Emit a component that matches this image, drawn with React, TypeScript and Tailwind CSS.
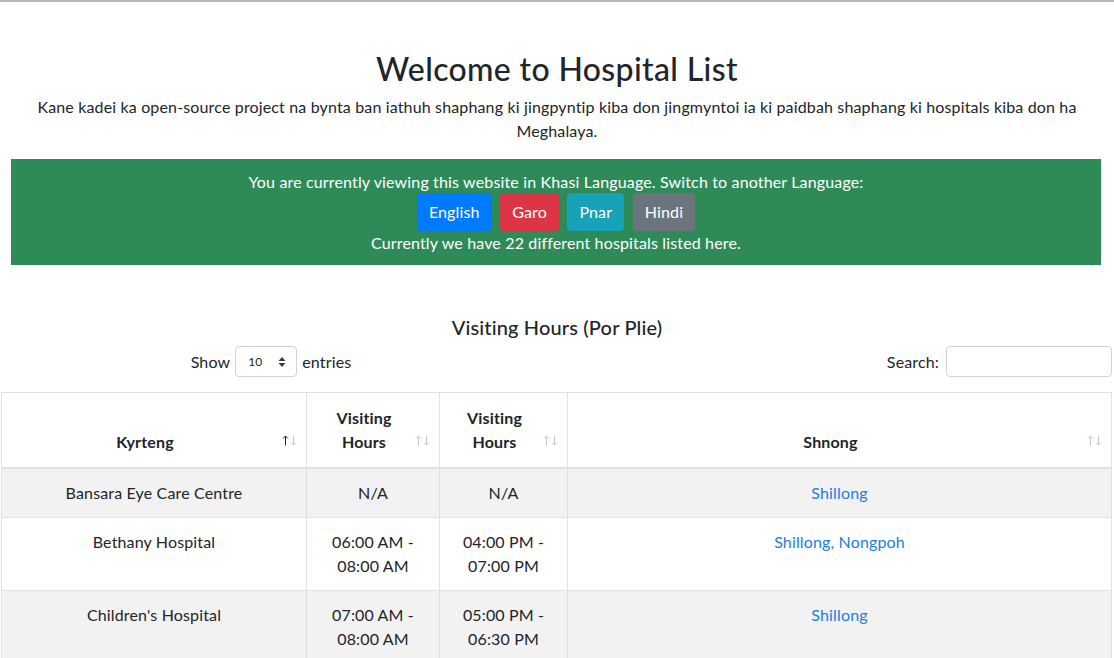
import React from "react";

const font = { fontFamily: "Lato, 'Liberation Sans', sans-serif" };

function Arrow({ up, color }: { up?: boolean; color: string }) {
  return (
    <svg width="7" height="11" viewBox="0 0 7 11" className={up ? "" : "rotate-180"}>
      <path d="M3.5 1 V10.5 M1 3.5 L3.5 1 L6 3.5" fill="none" stroke={color} strokeWidth="1" />
    </svg>
  );
}

function SortIcons({ active }: { active?: boolean }) {
  return (
    <span className="absolute right-[9px] bottom-[21px] flex gap-[1px]">
      <Arrow up color={active ? "#212529" : "#c4c6c8"} />
      <Arrow color="#c4c6c8" />
    </span>
  );
}

const rows = [
  { name: "Bansara Eye Care Centre", a: ["N/A"], b: ["N/A"], place: "Shillong" },
  { name: "Bethany Hospital", a: ["06:00 AM -", "08:00 AM"], b: ["04:00 PM -", "07:00 PM"], place: "Shillong, Nongpoh" },
  { name: "Children's Hospital", a: ["07:00 AM -", "08:00 AM"], b: ["05:00 PM -", "06:30 PM"], place: "Shillong" },
];

export default function App() {
  return (
    <div className="min-h-[658px] bg-white text-[#212529] text-[16px] leading-[24px] tracking-[0.15px]" style={font}>
      <div className="h-[2px] bg-[#b9b9b9]" />
      <div className="pt-[48px] text-center">
        <h2 className="text-[32px] leading-[38px] font-medium tracking-[0.35px]">Welcome to Hospital List</h2>
        <p className="mt-[7px] px-[30px]">
          Kane kadei ka open-source project na bynta ban iathuh shaphang ki jingpyntip kiba don jingmyntoi ia ki paidbah shaphang ki hospitals kiba don ha Meghalaya.
        </p>
      </div>
      <div className="mx-[11px] mt-[16px] w-[1090px] bg-[#2e8b57] pt-[11px] pb-[10px] text-center text-white">
        <div>You are currently viewing this website in Khasi Language. Switch to another Language:</div>
        <div className="flex justify-center gap-[8.5px] my-[-1px]">
          <button className="h-[38px] px-[12px] rounded-[4px] bg-[#007bff] text-white">English</button>
          <button className="h-[38px] px-[12px] rounded-[4px] bg-[#dc3545] text-white">Garo</button>
          <button className="h-[38px] px-[12px] rounded-[4px] bg-[#17a2b8] text-white">Pnar</button>
          <button className="h-[38px] px-[12px] rounded-[4px] bg-[#6c757d] text-white">Hindi</button>
        </div>
        <div className="pt-[1px]">Currently we have 22 different hospitals listed here.</div>
      </div>
      <h5 className="mt-[50px] text-center text-[20px] leading-[24px] font-medium">Visiting Hours (Por Plie)</h5>
      <div className="mt-[7px] flex items-center w-[1112px]">
        <div className="w-[556px] flex justify-center">
          <label className="flex items-center gap-[5px] pr-[14px]">
            Show
            <span className="flex items-center justify-between w-[62px] h-[31px] border border-[#ced4da] rounded-[4px] pl-[12px] pr-[10px] text-[12px]">
              10
              <svg width="8" height="12" viewBox="0 0 8 12"><path d="M4 1 L7.5 5 H0.5 Z M4 11 L7.5 7 H0.5 Z" fill="#343a40" /></svg>
            </span>
            entries
          </label>
        </div>
        <div className="w-[556px] flex justify-end items-center gap-[7px]">
          <span>Search:</span>
          <span className="w-[166px] h-[31px] border border-[#ced4da] rounded-[4px]" />
        </div>
      </div>
      <table className="mt-[15px] ml-px w-[1111px] border-collapse border border-[#dee2e6] table-fixed">
        <colgroup>
          <col className="w-[305px]" />
          <col className="w-[133px]" />
          <col className="w-[128px]" />
          <col />
        </colgroup>
        <thead>
          <tr className="h-[75px]">
            <th className="relative border border-[#dee2e6] border-b-2 align-bottom px-[12px] pt-[12px] pb-[13px] font-bold text-center pr-[30px]">
              Kyrteng<SortIcons active />
            </th>
            <th className="relative border border-[#dee2e6] border-b-2 align-bottom px-[12px] pt-[12px] pb-[13px] font-bold text-center pr-[30px]">
              Visiting<br />Hours<SortIcons />
            </th>
            <th className="relative border border-[#dee2e6] border-b-2 align-bottom px-[12px] pt-[12px] pb-[13px] font-bold text-center pr-[30px]">
              Visiting<br />Hours<SortIcons />
            </th>
            <th className="relative border border-[#dee2e6] border-b-2 align-bottom px-[12px] pt-[12px] pb-[13px] font-bold text-center pr-[30px]">
              Shnong<SortIcons />
            </th>
          </tr>
        </thead>
        <tbody>
          {rows.map((r, i) => (
            <tr key={i} className={i % 2 === 0 ? "bg-[#f2f2f2]" : "bg-white"}>
              <td className="border border-[#dee2e6] align-top text-center p-[12px]">{r.name}</td>
              <td className="border border-[#dee2e6] align-top text-center p-[12px]">
                {r.a.map((x, j) => (<div key={j}>{x}</div>))}
              </td>
              <td className="border border-[#dee2e6] align-top text-center p-[12px]">
                {r.b.map((x, j) => (<div key={j}>{x}</div>))}
              </td>
              <td className="border border-[#dee2e6] align-top text-center p-[12px]">
                <a className="text-[#1a7ee6]">{r.place}</a>
              </td>
            </tr>
          ))}
        </tbody>
      </table>
    </div>
  );
}
